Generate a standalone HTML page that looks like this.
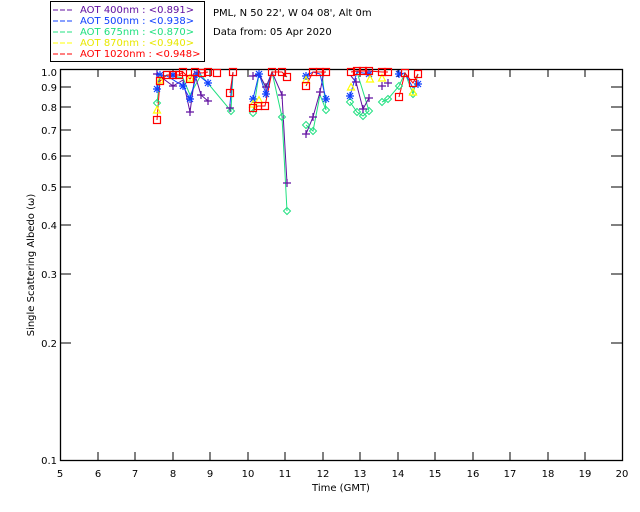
<!DOCTYPE html>
<html><head><meta charset="utf-8"><style>
html,body{margin:0;padding:0;background:#fff;}
svg{display:block;font-family:"DejaVu Sans","Liberation Sans",sans-serif;}
</style></head><body>
<svg width="640" height="512" viewBox="0 0 640 512" xmlns="http://www.w3.org/2000/svg">
<defs>
<g id="sq"><rect x="-3.5" y="-3.5" width="7" height="7" fill="none" stroke="#f00" stroke-width="1.2"/></g>
<g id="pl"><path d="M-4 0H4M0 -4V4" stroke="#6010a0" stroke-width="1.2"/></g>
<g id="dm"><path d="M0 -3.5L3.5 0L0 3.5L-3.5 0Z" fill="none" stroke="#20e080" stroke-width="1"/></g>
<g id="as"><path d="M-4 0H4M0 -4V4M-3 -3L3 3M-3 3L3 -3" stroke="#1040ff" stroke-width="1.2"/></g>
<g id="tr"><path d="M0 -3.5L3.5 3L-3.5 3Z" fill="none" stroke="#ff0" stroke-width="1.2"/></g>
</defs>
<!-- legend -->
<rect x="50.5" y="1.5" width="154" height="60" fill="none" stroke="#000" stroke-width="1"/>
<g font-size="10">
<line x1="53" y1="10" x2="73" y2="10" stroke="#6010a0" stroke-dasharray="5,2"/>
<text x="80" y="13" fill="#6010a0">AOT  400nm : &lt;0.891&gt;</text>
<line x1="53" y1="21" x2="73" y2="21" stroke="#1040ff" stroke-dasharray="5,2"/>
<text x="80" y="24" fill="#1040ff">AOT  500nm : &lt;0.938&gt;</text>
<line x1="53" y1="32" x2="73" y2="32" stroke="#20e080" stroke-dasharray="5,2"/>
<text x="80" y="35" fill="#20e080">AOT  675nm : &lt;0.870&gt;</text>
<line x1="53" y1="43" x2="73" y2="43" stroke="#ff0" stroke-dasharray="5,2"/>
<text x="80" y="46" fill="#e8e800">AOT  870nm : &lt;0.940&gt;</text>
<line x1="53" y1="54" x2="73" y2="54" stroke="#f00" stroke-dasharray="5,2"/>
<text x="80" y="57" fill="#f00">AOT 1020nm : &lt;0.948&gt;</text>
</g>
<text x="213" y="16" font-size="10">PML, N 50 22', W 04 08', Alt 0m</text>
<text x="213" y="35" font-size="10">Data from: 05 Apr 2020</text>
<!-- axes -->
<rect x="60.5" y="69.5" width="562" height="391" fill="none" stroke="#000" stroke-width="1.3"/>
<g stroke="#000" stroke-width="1">
<path d="M98 460v-8M135 460v-8M173 460v-8M210 460v-8M248 460v-8M285 460v-8M323 460v-8M360 460v-8M398 460v-8M435 460v-8M473 460v-8M510 460v-8M548 460v-8M585 460v-8"/>
<path d="M98 69v8M135 69v8M173 69v8M210 69v8M248 69v8M285 69v8M323 69v8M360 69v8M398 69v8M435 69v8M473 69v8M510 69v8M548 69v8M585 69v8"/>
<path d="M60 87h11M60 107h11M60 130h11M60 156h11M60 187h11M60 225h11M60 274h11M60 343h11"/>
<path d="M622 87h-11M622 107h-11M622 130h-11M622 156h-11M622 187h-11M622 225h-11M622 274h-11M622 343h-11"/>
</g>
<g font-size="10" text-anchor="end">
<text x="57" y="76">1.0</text><text x="57" y="91">0.9</text><text x="57" y="111">0.8</text><text x="57" y="134">0.7</text><text x="57" y="160">0.6</text><text x="57" y="191">0.5</text><text x="57" y="229">0.4</text><text x="57" y="278">0.3</text><text x="57" y="347">0.2</text><text x="57" y="464">0.1</text>
</g>
<g font-size="10" text-anchor="middle">
<text x="60" y="477">5</text><text x="98" y="477">6</text><text x="135" y="477">7</text><text x="173" y="477">8</text><text x="210" y="477">9</text><text x="248" y="477">10</text><text x="285" y="477">11</text><text x="323" y="477">12</text><text x="360" y="477">13</text><text x="398" y="477">14</text><text x="435" y="477">15</text><text x="473" y="477">16</text><text x="510" y="477">17</text><text x="548" y="477">18</text><text x="585" y="477">19</text><text x="622" y="477">20</text>
<text x="341" y="491">Time (GMT)</text>
<text transform="translate(34,265) rotate(-90)">Single Scattering Albedo (ω)</text>
</g>
<!-- data lines -->
<g fill="none" stroke-width="1">
<polyline stroke="#20e080" points="157,103 160,78 167,75 183,78 190,95 201,75 231,111 233,72"/>
<polyline stroke="#20e080" points="253,113 259,74 266,88 272,72 282,117 287,211"/>
<polyline stroke="#20e080" points="306,125 313,131 320,95 326,110 322,72"/>
<polyline stroke="#20e080" points="350,102 357,112 363,116 369,111 357,72"/>
<polyline stroke="#20e080" points="382,102 388,99 399,86 405,73 413,94 418,74"/>
<polyline stroke="#6010a0" points="157,74 173,86 183,80 190,112 195,75 201,95 208,101"/>
<polyline stroke="#6010a0" points="253,76 259,74 266,87 272,72 282,95 287,183"/>
<polyline stroke="#6010a0" points="306,134 313,117 320,92 324,72"/>
<polyline stroke="#6010a0" points="351,76 356,82 363,109 369,98"/>
<polyline stroke="#1040ff" points="157,89 160,75 167,76 183,86 190,99 197,74 208,83"/>
<polyline stroke="#1040ff" points="230,104 233,72"/>
<polyline stroke="#1040ff" points="253,99 259,74 266,94 272,72"/>
<polyline stroke="#1040ff" points="306,76 313,72 320,74 326,99"/>
<polyline stroke="#1040ff" points="350,96 357,72 369,74"/>
<polyline stroke="#1040ff" points="399,74 405,73 413,88 418,84"/>
<polyline stroke="#f00" points="157,120 160,81 167,75 173,75 179,75 183,72 190,79 195,72 202,73 208,72"/>
<polyline stroke="#f00" points="230,93 233,72"/>
<polyline stroke="#f00" points="253,108 258,106 265,106 272,72 282,72 287,77"/>
<polyline stroke="#f00" points="306,86 313,72 320,72 326,72"/>
<polyline stroke="#f00" points="351,72 357,71 363,71 369,71 382,72 388,72"/>
<polyline stroke="#f00" points="399,97 405,73 413,83 418,74"/>
</g>
<!-- markers -->
<g>
<use href="#dm" x="157" y="103"/><use href="#dm" x="231" y="111"/><use href="#dm" x="253" y="113"/><use href="#dm" x="282" y="117"/><use href="#dm" x="287" y="211"/><use href="#dm" x="306" y="125"/><use href="#dm" x="313" y="131"/><use href="#dm" x="326" y="110"/><use href="#dm" x="350" y="102"/><use href="#dm" x="357" y="112"/><use href="#dm" x="363" y="116"/><use href="#dm" x="369" y="111"/><use href="#dm" x="382" y="102"/><use href="#dm" x="388" y="99"/><use href="#dm" x="399" y="86"/><use href="#dm" x="413" y="94"/>
<use href="#pl" x="157" y="74"/><use href="#pl" x="173" y="86"/><use href="#pl" x="190" y="112"/><use href="#pl" x="201" y="95"/><use href="#pl" x="208" y="101"/><use href="#pl" x="230" y="108"/><use href="#pl" x="253" y="76"/><use href="#pl" x="266" y="87"/><use href="#pl" x="282" y="95"/><use href="#pl" x="287" y="183"/><use href="#pl" x="306" y="134"/><use href="#pl" x="313" y="117"/><use href="#pl" x="320" y="92"/><use href="#pl" x="356" y="82"/><use href="#pl" x="363" y="109"/><use href="#pl" x="369" y="98"/><use href="#pl" x="382" y="86"/><use href="#pl" x="388" y="83"/>
<use href="#as" x="157" y="89"/><use href="#as" x="160" y="75"/><use href="#as" x="183" y="86"/><use href="#as" x="190" y="99"/><use href="#as" x="208" y="83"/><use href="#as" x="253" y="99"/><use href="#as" x="259" y="74"/><use href="#as" x="266" y="94"/><use href="#as" x="306" y="76"/><use href="#as" x="326" y="99"/><use href="#as" x="350" y="96"/><use href="#as" x="399" y="74"/><use href="#as" x="418" y="84"/><use href="#as" x="173" y="75"/><use href="#as" x="197" y="74"/><use href="#as" x="369" y="74"/>
<use href="#tr" x="157" y="110"/><use href="#tr" x="160" y="80"/><use href="#tr" x="190" y="78"/><use href="#tr" x="259" y="100"/><use href="#tr" x="253" y="104"/><use href="#tr" x="351" y="87"/><use href="#tr" x="370" y="79"/><use href="#tr" x="382" y="78"/><use href="#tr" x="413" y="92"/><use href="#tr" x="306" y="80"/>
<use href="#sq" x="157" y="120"/><use href="#sq" x="160" y="81"/><use href="#sq" x="167" y="75"/><use href="#sq" x="173" y="75"/><use href="#sq" x="179" y="75"/><use href="#sq" x="183" y="72"/><use href="#sq" x="190" y="79"/><use href="#sq" x="195" y="72"/><use href="#sq" x="202" y="73"/><use href="#sq" x="208" y="72"/><use href="#sq" x="217" y="73"/><use href="#sq" x="230" y="93"/><use href="#sq" x="233" y="72"/><use href="#sq" x="253" y="108"/><use href="#sq" x="258" y="106"/><use href="#sq" x="265" y="106"/><use href="#sq" x="272" y="72"/><use href="#sq" x="282" y="72"/><use href="#sq" x="287" y="77"/><use href="#sq" x="306" y="86"/><use href="#sq" x="313" y="72"/><use href="#sq" x="320" y="72"/><use href="#sq" x="326" y="72"/><use href="#sq" x="351" y="72"/><use href="#sq" x="357" y="71"/><use href="#sq" x="363" y="71"/><use href="#sq" x="369" y="71"/><use href="#sq" x="382" y="72"/><use href="#sq" x="388" y="72"/><use href="#sq" x="399" y="97"/><use href="#sq" x="405" y="73"/><use href="#sq" x="413" y="83"/><use href="#sq" x="418" y="74"/>
</g>
</svg>
</body></html>
